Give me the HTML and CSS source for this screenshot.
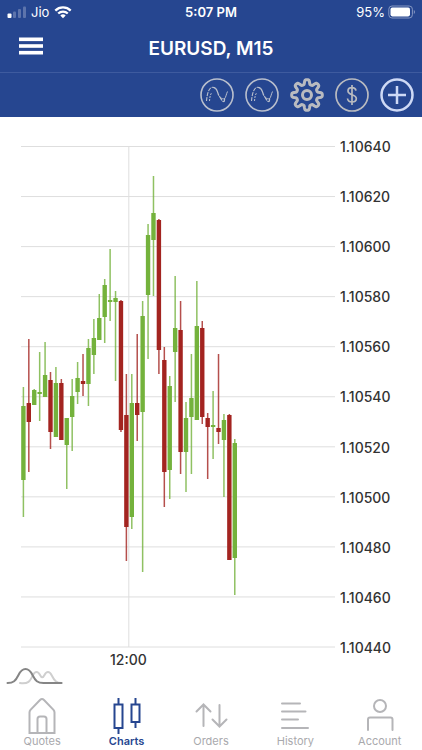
FILE: index.html
```html
<!DOCTYPE html>
<html lang="en">

<head>
    <meta charset="UTF-8">
    <meta name="viewport" content="width=device-width, initial-scale=1.0">
    <title>EURUSD, M15</title>
    <link rel="stylesheet" href="styles.css">
</head>

<body>
    <header class="header">
        <div class="status-bar">
            <div class="status-left">
                <svg width="20" height="14" viewBox="0 0 20 14" fill="#fff">
                    <rect x="1.5" y="8.5" width="4" height="4.5" rx="1" />
                    <g opacity="0.25">
                        <rect x="7" y="6.5" width="3" height="6.5" rx="1" />
                        <rect x="12" y="4" width="3" height="9" rx="1" />
                        <rect x="17" y="1.5" width="3" height="11.5" rx="1" />
                    </g>
                </svg>
                <span>Jio</span>
                <svg width="18" height="14" viewBox="0 0 18 14" fill="none" stroke="#fff" stroke-width="2.3">
                    <path d="M1.3 5.6a11 11 0 0 1 15.4 0" />
                    <path d="M4.2 8.5a7 7 0 0 1 9.6 0" />
                    <path d="M9 13.2 6.3 10.5a3.9 3.9 0 0 1 5.4 0z" fill="#fff" stroke="none" />
                </svg>
            </div>
            <span class="clock">5:07 PM</span>
            <div class="status-right">
                <span>95%</span>
                <svg width="28" height="14" viewBox="0 0 28 14">
                    <rect x="0.8" y="1" width="23.6" height="12" rx="3.2" fill="none" stroke="#8496c2" />
                    <rect x="2.5" y="2.6" width="19.5" height="8.8" rx="1.8" fill="#fff" />
                    <path d="M25.8 5v4c1.6-.6 1.6-3.4 0-4z" fill="#8496c2" />
                </svg>
            </div>
        </div>

        <div class="title-bar">
            <button type="button" class="menu-button" aria-label="Menu">
                <svg width="24" height="18" viewBox="0 0 24 18" fill="#fff">
                    <rect y="0.5" width="24" height="3.6" />
                    <rect y="7.2" width="24" height="3.6" />
                    <rect y="13.9" width="24" height="3.6" />
                </svg>
            </button>
            <h1>EURUSD, M15</h1>
        </div>

        <div class="toolbar">
            <button type="button" class="tool" aria-label="Chart type">
                <svg viewBox="0 0 34 34" fill="none" stroke="#b9bfcd">
                    <circle cx="17" cy="17" r="16" stroke-width="1.6" />
                    <path d="M6.500 23c.5-5 1.500-12 5-13.500 2.500-.8 4.500 1 6 4" stroke-width="1.1" stroke-dasharray="4 1" />
                    <path d="M9.500 23c.3-3 .5-6 2-8" stroke-width="1" stroke-dasharray="2 1" />
                    <path d="M13 9.500c5 0 4 6 6.500 9 1.500 1.500 2 4.500 4 5 1.500.3.500-2 1.500-3.500" stroke-width="1.2" stroke-dasharray="5 .7" />
                    <path d="M20 20c2 0 3 1.500 4.500.5s1.500-4 3-7" stroke-width="1" />
                </svg>
            </button>
            <button type="button" class="tool" aria-label="Indicators">
                <svg viewBox="0 0 34 34" fill="none" stroke="#b9bfcd">
                    <circle cx="17" cy="17" r="16" stroke-width="1.6" />
                    <path d="M6.500 23c.5-5 1.500-12 5-13.500 2.500-.8 4.500 1 6 4" stroke-width="1.1" stroke-dasharray="4 1" />
                    <path d="M9.500 23c.3-3 .5-6 2-8" stroke-width="1" stroke-dasharray="2 1" />
                    <path d="M13 9.500c5 0 4 6 6.500 9 1.500 1.500 2 4.500 4 5 1.500.3.500-2 1.500-3.500" stroke-width="1.2" stroke-dasharray="5 .7" />
                    <path d="M20 20c2 0 3 1.500 4.500.5s1.500-4 3-7" stroke-width="1" />
                </svg>
            </button>
            <button type="button" class="tool" aria-label="Settings">
                <svg viewBox="0 0 34 34" fill="none" stroke="#b9bbc0" stroke-width="3" stroke-linejoin="round">
                    <path id="gear" />
                    <circle cx="17" cy="17" r="4.500" />
                </svg>
            </button>
            <button type="button" class="tool" aria-label="Trade">
                <svg viewBox="0 0 34 34" fill="none" stroke="#b9bbc0" stroke-width="1.7">
                    <circle cx="17" cy="17" r="16" />
                    <path d="M21 12.700c-.4-2-2-3-4-3-2.400 0-4 1.300-4 3.300 0 4.700 8.300 2.700 8.300 7.500 0 2.200-1.800 3.500-4.300 3.500s-4.200-1.300-4.500-3.500M17 7v20" />
                </svg>
            </button>
            <button type="button" class="tool" aria-label="New order">
                <svg viewBox="0 0 34 34" fill="none" stroke="#ced9f5" stroke-width="2.500">
                    <circle cx="17" cy="17" r="15.500" />
                    <path d="M17 8v18M8 17h18" />
                </svg>
            </button>
        </div>
    </header>

    <main class="chart">
        <div class="chart-body">
            <svg class="plot" id="plot" viewBox="21 137 314 519" role="img" aria-label="EURUSD candles"></svg>
            <div class="prices">
                <span>1.10640</span>
                <span>1.10620</span>
                <span>1.10600</span>
                <span>1.10580</span>
                <span>1.10560</span>
                <span>1.10540</span>
                <span>1.10520</span>
                <span>1.10500</span>
                <span>1.10480</span>
                <span>1.10460</span>
                <span>1.10440</span>
            </div>
        </div>
        <div class="times"><span>12:00</span></div>
        <svg class="waves" width="58" height="18" viewBox="0 0 58 18" fill="none" stroke-linecap="round">
            <path d="M14 15c9 1 10-2 13-8 2-4 5-4 7 0 1.500 3 3 3 4.500 0 2-4 5-4 7 0 3 6 5 8 10 8" stroke="#cfcfcf" stroke-width="2" />
            <path d="M1.500 15c6 0 8-2 11-8 4-8 10-8 14 0 3 6 5 8 11 8h18" stroke="#858585" stroke-width="2" />
        </svg>
    </main>

    <nav class="tabs">
        <a href="#quotes">
            <svg viewBox="0 0 36 38">
                <path d="M5.500 36V15.500q0-1.500 1-2.700L16 3q2-2 4 0l9.500 9.800q1 1.200 1 2.700V36z" />
                <path d="M13.500 36V22q0-2.500 2.500-2.500h4q2.500 0 2.500 2.500v14" />
            </svg>
            Quotes
        </a>
        <a href="#charts" class="active">
            <svg viewBox="0 0 36 38">
                <path d="M5.500 7.500h8v23.500h-8zM22.500 7.500h8V25h-8zM9.500 1v6.500M9.500 31v6M26.500 1v6.500M26.500 25v6" />
            </svg>
            Charts
        </a>
        <a href="#orders">
            <svg viewBox="0 0 36 38">
                <path d="M10.500 29V8M3.500 14.500l7-7 7 7M26.500 8v21M19.500 22.500l7 7 7-7" />
            </svg>
            Orders
        </a>
        <a href="#history">
            <svg viewBox="0 0 36 38">
                <path d="M5 6.500h18M5 14.500h23.500M5 22.500h16M5 31h26" />
            </svg>
            History
        </a>
        <a href="#account">
            <svg viewBox="0 0 36 38">
                <circle cx="18" cy="9" r="6" />
                <path d="M6 33V22.500q0-2 2-2h20.500q2 0 2 2V33" />
            </svg>
            Account
        </a>
    </nav>

    <script src="chart.js"></script>
</body>
</html>
```
FILE: styles.css
```css
body {
    margin: 0;
    min-height: 100vh;
    display: flex;
    flex-direction: column;
    font-family: Inter, 'Liberation Sans', sans-serif;
    background-color: #fff;
    color: #333;
}

svg {
    display: block;
}

button {
    padding: 0;
    border: none;
    background: none;
    cursor: pointer;
}

.header {
    background-color: #264690;
    color: #fff;
}

.status-bar {
    display: grid;
    grid-template-columns: 1fr auto 1fr;
    align-items: center;
    height: 24px;
    padding: 0 6px;
    font-size: 13px;
}

.status-left, .status-right {
    display: flex;
    align-items: center;
    gap: 5px;
}

.status-right {
    justify-content: flex-end;
    gap: 3px;
}

.clock {
    font-weight: 600;
}

.title-bar {
    display: grid;
    grid-template-columns: 24px 1fr 24px;
    align-items: center;
    height: 49px;
    padding: 0 19px;
    border-bottom: 1px solid #3e5b9f;
    box-sizing: border-box;
}

.menu-button {
    margin-bottom: 5px;
}

.title-bar h1 {
    margin: 0;
    font-size: 19px;
    font-weight: 600;
    text-align: center;
}

.toolbar {
    display: flex;
    justify-content: flex-end;
    align-items: center;
    gap: 11px;
    height: 44px;
    padding: 0 8px;
}

.tool svg {
    width: 34px;
    height: 34px;
}

.chart {
    padding: 20px 21px 0;
}

.chart-body {
    display: flex;
    gap: 5px;
}

.plot {
    flex: 1;
    min-width: 0;
}

.prices {
    display: flex;
    flex-direction: column;
    justify-content: space-between;
    width: 61px;
    margin: 1px 0 -1px;
    font-size: 14px;
    font-weight: 500;
    line-height: 18px;
}

.times {
    margin-top: -4px;
    padding-left: 89px;
    font-size: 14px;
    font-weight: 500;
    line-height: 16px;
}

.waves {
    margin-left: -15px;
}

.tabs {
    display: grid;
    grid-template-columns: repeat(5, 1fr);
    margin-top: auto;
}

.tabs a {
    display: flex;
    flex-direction: column;
    align-items: center;
    color: #a9a9ad;
    font-size: 11px;
    line-height: 18px;
    text-decoration: none;
}

.tabs svg {
    width: 36px;
    height: 38px;
    margin-bottom: -3px;
    fill: none;
    stroke: #b5b5b8;
    stroke-width: 2;
    stroke-linecap: round;
}

.tabs .active {
    color: #264690;
    font-weight: 600;
}

.tabs .active svg {
    stroke: #264690;
    stroke-linecap: butt;
}

/* chart drawing */
.grid {
    stroke: #dedede;
    stroke-width: 1;
}

.up {
    stroke: #74b23c;
}

.down {
    stroke: #a32420;
}

.wick {
    stroke-width: 1.5;
    opacity: 0.8;
}

.candle {
    stroke-width: 4.4;
}
```
FILE: chart.js
```js
// [direction, high, body top, body bottom, low]
const candles = [
    ['up', 387, 406, 480, 517],
    ['down', 339, 403, 422, 472],
    ['up', 389, 390, 405, 405],
    ['up', 352, 392, 394, 421],
    ['up', 342, 375, 397, 397],
    ['down', 372, 380, 432, 449],
    ['up', 367, 383, 437, 437],
    ['down', 379, 383, 440, 440],
    ['up', 418, 418, 445, 489],
    ['up', 379, 396, 417, 451],
    ['up', 362, 378, 392, 404],
    ['down', 354, 381, 384, 396],
    ['up', 339, 348, 384, 406],
    ['up', 319, 338, 355, 374],
    ['up', 294, 318, 340, 340],
    ['up', 279, 285, 317, 343],
    ['up', 249, 300, 302, 321],
    ['up', 291, 298, 302, 381],
    ['down', 300, 301, 430, 432],
    ['down', 374, 415, 527, 561],
    ['up', 374, 403, 517, 529],
    ['down', 334, 403, 415, 441],
    ['up', 301, 316, 412, 572],
    ['up', 224, 235, 295, 359],
    ['up', 176, 213, 240, 296],
    ['down', 219, 220, 350, 374],
    ['down', 347, 360, 472, 507],
    ['up', 376, 386, 470, 499],
    ['up', 276, 328, 352, 402],
    ['down', 301, 330, 452, 474],
    ['up', 402, 418, 452, 492],
    ['up', 354, 398, 417, 474],
    ['up', 281, 326, 420, 420],
    ['down', 321, 328, 417, 424],
    ['down', 413, 418, 427, 479],
    ['up', 391, 425, 427, 459],
    ['down', 354, 428, 432, 444],
    ['up', 414, 420, 440, 497],
    ['down', 414, 415, 560, 560],
    ['up', 439, 443, 558, 595]
];

function line(x1, y1, x2, y2, name) {
    const el = document.createElementNS('http://www.w3.org/2000/svg', 'line');
    el.setAttribute('x1', x1);
    el.setAttribute('y1', y1);
    el.setAttribute('x2', x2);
    el.setAttribute('y2', y2);
    el.setAttribute('class', name);
    document.getElementById('plot').appendChild(el);
}

for (let i = 0; i <= 10; i++) {
    line(21, 146.5 + i * 50.05, 335, 146.5 + i * 50.05, 'grid');
}
line(128.8, 146, 128.8, 647, 'grid');

candles.forEach(([dir, high, top, bottom, low], i) => {
    const x = 23.4 + i * 5.42;
    line(x, high, x, low, 'wick ' + dir);
    line(x, top, x, bottom, 'candle ' + dir);
});

// gear outline: eight rounded teeth
const points = [];
for (let i = 0; i <= 160; i++) {
    const a = i * Math.PI / 80;
    const r = 13 + 2.4 * Math.tanh(2 * Math.cos(8 * a));
    points.push((17 + r * Math.sin(a)).toFixed(2) + ' ' + (17 - r * Math.cos(a)).toFixed(2));
}
document.getElementById('gear').setAttribute('d', 'M' + points.join('L') + 'z');
```
